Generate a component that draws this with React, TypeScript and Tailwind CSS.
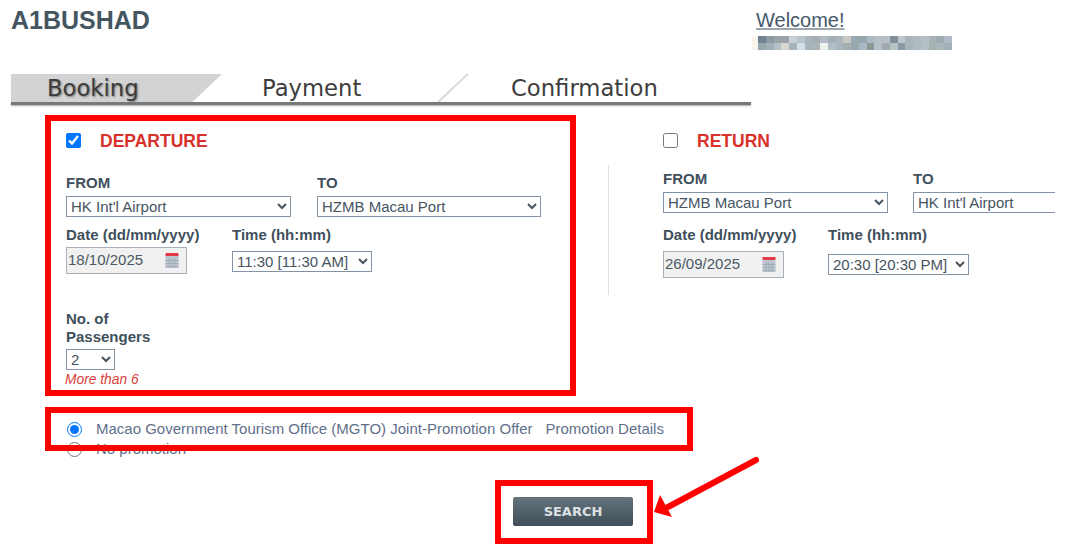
const MOSAIC = [
  '#6f8290', '#8b9aa3', '#98a3a8', '#9aa4a8', '#c9cfd3', '#b9c5ce', '#a9b5bc', '#a6afb2', '#b0bdc6', '#a5b1b8', '#aab5bc', '#c8c8c4', '#9aa8b0',
  '#97a6ae', '#a9b8c3', '#b5bfc4', '#b8c0c4', '#7f909c', '#bcc6cb', '#aab4b9', '#b0babe', '#b4c0c5', '#a9b3b5', '#9eacb2', '#b0bac6',
  '#98a6ae', '#a3afb6', '#b5c0c7', '#d8d8d2', '#a7b3b9', '#d4e0e8', '#a9b4b9', '#aab5b9', '#f0f2f2', '#b0bec8', '#a9b4bb', '#a3aeb2', '#9aa8ae',
  '#a8b8c4', '#8d9795', '#b5c0c8', '#9fabb0', '#b8c2c4', '#8b9ba5', '#a8b5bd', '#b0bcc2', '#b4bfc6', '#a6b1b4', '#aab5b8', '#a4b0b8', '#b3bdca',
];

const labelClass = 'text-[15px] leading-4 font-bold text-[#3f505c]';
const selectClass = 'block h-[21px] border border-[#8494a5] bg-white text-[15px] leading-[19px] text-[#46545f]';

const CalendarIcon = () => (
  <svg width="14" height="15" viewBox="0 0 14 15" className="shrink-0">
    <rect x="0.5" y="0" width="13" height="3" fill="#e23a48" />
    <rect x="0.5" y="3" width="13" height="12" fill="#bcc5d0" />
    <path d="M0.5 7.5h13M0.5 10.5h13M0.5 13.5h13M4 5v10M7 5v10M10 5v10" stroke="#a3aebb" strokeWidth="1" />
  </svg>
);

const DateInput = ({ value }: { value: string }) => (
  <div className="flex h-[27px] w-[121px] items-center justify-between border border-[#a5b0ba] bg-[#f1f1f1] pr-[7px] text-[15px] text-[#4a5863]">
    <span className="pl-px">{value}</span>
    <CalendarIcon />
  </div>
);

const Check = ({ checked, title }: { checked: boolean; title: string }) => (
  <div className="flex h-[15px] items-center">
    <input type="checkbox" defaultChecked={checked} className="h-[15px] w-[15px]" />
    <span className="ml-[19px] mt-[2px] text-[17.5px] font-bold text-[#d9322c]">{title}</span>
  </div>
);

const Departure = () => (
  <section className="w-[608px] shrink-0 pl-[66px]">
    <Check checked title="DEPARTURE" />
    <div className="mt-[27px] flex">
      <div className="w-[251px]">
        <div className={labelClass}>FROM</div>
        <select className={`${selectClass} mt-[5px] w-[225px]`} defaultValue="HK Int'l Airport">
          <option>HK Int'l Airport</option>
        </select>
      </div>
      <div>
        <div className={labelClass}>TO</div>
        <select className={`${selectClass} mt-[5px] w-[224px]`} defaultValue="HZMB Macau Port">
          <option>HZMB Macau Port</option>
        </select>
      </div>
    </div>
    <div className="mt-[10px] flex">
      <div className="w-[166px]">
        <div className={labelClass}>Date (dd/mm/yyyy)</div>
        <div className="mt-1">
          <DateInput value="18/10/2025" />
        </div>
      </div>
      <div>
        <div className={labelClass}>Time (hh:mm)</div>
        <select className={`${selectClass} mt-2 h-[20px] w-[140px]`} defaultValue="11:30">
          <option value="11:30">11:30 [11:30 AM]</option>
        </select>
      </div>
    </div>
    <div className="mt-9 w-[100px] text-[15px] leading-[18px] font-bold text-[#3f505c]">No. of Passengers</div>
    <select className={`${selectClass} mt-[3px] h-[20px] w-[49px]`} defaultValue="2">
      <option>2</option>
    </select>
    <div className="-ml-px mt-[3px] text-[13.8px] leading-[14px] italic text-[#d9423c]">More than 6</div>
  </section>
);

const Return = () => (
  <section className="ml-[54px] w-[392px]">
    <Check checked={false} title="RETURN" />
    <div className="mt-[23px] flex overflow-hidden">
      <div className="w-[250px] shrink-0">
        <div className={labelClass}>FROM</div>
        <select className={`${selectClass} mt-[5px] w-[225px]`} defaultValue="HZMB Macau Port">
          <option>HZMB Macau Port</option>
        </select>
      </div>
      <div className="shrink-0">
        <div className={labelClass}>TO</div>
        <select className={`${selectClass} mt-[5px] w-[225px]`} defaultValue="HK Int'l Airport">
          <option>HK Int'l Airport</option>
        </select>
      </div>
    </div>
    <div className="mt-[14px] flex">
      <div className="w-[165px]">
        <div className={labelClass}>Date (dd/mm/yyyy)</div>
        <div className="mt-2">
          <DateInput value="26/09/2025" />
        </div>
      </div>
      <div>
        <div className={labelClass}>Time (hh:mm)</div>
        <select className={`${selectClass} mt-[11px] h-[20px] w-[141px]`} defaultValue="20:30">
          <option value="20:30">20:30 [20:30 PM]</option>
        </select>
      </div>
    </div>
  </section>
);

const Annotations = () => (
  <>
    <div className="absolute left-[45px] top-[115px] h-[281px] w-[531px] border-[6px] border-[#ff0000]" />
    <div className="absolute left-[45px] top-[407px] h-[44px] w-[648px] border-[6px] border-[#ff0000]" />
    <div className="absolute left-[495px] top-[480px] h-[64px] w-[158px] border-[6px] border-[#ff0000]" />
    <svg className="absolute left-[640px] top-[450px]" width="130" height="80" viewBox="0 0 130 80">
      <path d="M116 10L28 57" stroke="#ff0000" strokeWidth="6" strokeLinecap="round" />
      <polygon points="14,62 20,45 32,67" fill="#ff0000" />
    </svg>
  </>
);

export default function App() {
  return (
    <div className="relative h-[555px] w-[1072px] overflow-hidden bg-white font-['Liberation_Sans',Arial,sans-serif]">
      <header className="flex h-[74px]">
        <h1 className="ml-[11px] mt-[6px] w-[741px] text-[25px] leading-7 font-bold text-[#44565f]">A1BUSHAD</h1>
        <div className="mt-[10px]">
          <div className="ml-1 text-[20px] leading-[21px] text-[#46586a] underline decoration-[#9aa5ae]">Welcome!</div>
          <div className="mt-[5px] flex h-[14px] w-[200px]">
            <div className="w-[6px] bg-[#f8f4ee]" />
            <div className="grid flex-1 grid-cols-[repeat(25,1fr)] grid-rows-2">
              {MOSAIC.map((color, i) => (
                <div key={i} style={{ backgroundColor: color }} />
              ))}
            </div>
          </div>
        </div>
      </header>

      <nav className="relative ml-[11px] h-[28px] w-[740px]">
        <div className="absolute inset-0 w-[211px] bg-[#d2d3d5] [clip-path:polygon(0_0,100%_0,86%_100%,0_100%)]" />
        <div className="absolute left-[426px] top-0 h-[28px] w-[32px] bg-[#d6d6d6] [clip-path:polygon(92%_0,100%_0,8%_100%,0_100%)]" />
        <div className="relative flex h-full items-center pl-9 font-['DejaVu_Sans',Verdana,sans-serif] text-[22.7px] leading-none text-[#3d3d3d]">
          <span className="w-[215px] [text-shadow:1px_1px_2px_#777]">Booking</span>
          <span className="w-[249px]">Payment</span>
          <span>Confirmation</span>
        </div>
      </nav>
      <div className="ml-[11px] h-[3px] w-[740px] bg-[#77787a] shadow-[0_1px_2px_#aaa]" />

      <main className="mt-[28px] flex">
        <Departure />
        <div className="mt-[32px] h-[130px] w-px bg-[#e0e0e0]" />
        <Return />
      </main>

      <div className="mt-[34px] flex flex-col gap-1 pl-[67px] text-[15px] leading-4 text-[#5f6f8a]">
        <label className="flex h-4 items-center">
          <input type="radio" name="promo" defaultChecked className="h-[15px] w-[15px]" />
          <span className="ml-[14px]">Macao Government Tourism Office (MGTO) Joint-Promotion Offer</span>
          <span className="ml-[13px]">Promotion Details</span>
        </label>
        <label className="flex h-4 items-center">
          <input type="radio" name="promo" className="h-[15px] w-[15px]" />
          <span className="ml-[14px]">No promotion</span>
        </label>
      </div>

      <div className="ml-[513px] mt-10">
        <button className="h-[29px] w-[120px] rounded-[2px] bg-gradient-to-b from-[#64737c] to-[#3f4e58] font-['DejaVu_Sans',Verdana,sans-serif] text-[13px] font-bold text-[#dde1e3]">
          SEARCH
        </button>
      </div>

      <Annotations />
    </div>
  );
}
